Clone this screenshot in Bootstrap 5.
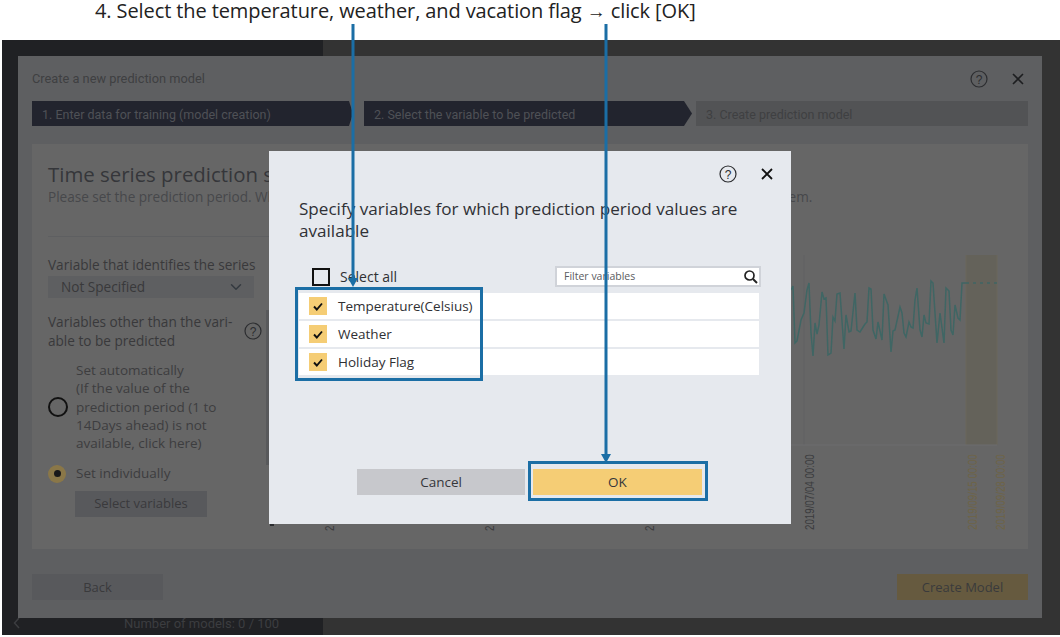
<!DOCTYPE html>
<html lang="en">
<head>
    <meta charset="UTF-8">
    <meta name="viewport" content="width=device-width, initial-scale=1.0">
    <title>Select variables</title>
    <link href="https://cdn.jsdelivr.net/npm/bootstrap@5.3.0/dist/css/bootstrap.min.css" rel="stylesheet">
    <style>
        html, body { height: 637px; overflow: hidden; }
        body { background: #fff; font-family: "Open Sans", "Noto Sans", sans-serif; position: relative; }
        .caption { height: 40px; padding-left: 95px; font-size: 20px; line-height: 22px; color: #222; letter-spacing: -.1px; white-space: nowrap; }
        .cap-arrow { font-family: "Liberation Sans", sans-serif; font-size: 19px; }
        .shot { position: relative; margin-left: 2px; height: 595px; background: #333; overflow: hidden; }
        .side { position: absolute; left: 0; top: 0; bottom: 0; width: 321px; background: #202124; }
        .models { position: absolute; left: 122px; bottom: 2px; font-size: 13px; font-family: Roboto, sans-serif; color: #3c3d40; }
        .back-chev { position: absolute; left: 11px; bottom: 6px; }
        .win { position: absolute; left: 16px; top: 16px; width: 1024px; height: 562px; background: #5e5f61; padding: 0 14px; color: #3a3a3c; font-size: 14px; }
        .win-head { height: 44px; padding-top: 1px; font-size: 12.800px; font-family: Roboto, sans-serif; color: #3f4042; }
        .win-head .tool-gap { gap: 23px; padding-right: 3px; }
        .steps { height: 25px; font-size: 12.500px; font-family: Roboto, sans-serif; margin-top: 1px; }
        .step-item { background: #22242e; color: #4f5156; height: 25px; line-height: 27px; padding-left: 10px; }
        .step-a { width: 321px; margin-right: 11px; clip-path: polygon(0 0, calc(100% - 4px) 0, 100% 50%, calc(100% - 4px) 100%, 0 100%); }
        .step-b { width: 328px; margin-right: 4px; clip-path: polygon(0 0, calc(100% - 8px) 0, 100% 50%, calc(100% - 8px) 100%, 0 100%); }
        .step-c { flex: 1; background: #525355; color: #3f4042; }
        .panel { height: 405px; margin-top: 18px; background: #666; position: relative; }
        .panel-left { width: 238px; padding: 15px 0 0 16px; flex: none; position: relative; }
        .chart { position: absolute; right: 0; top: 0; }
        .panel-title { font-size: 20.400px; line-height: 24px; color: #35363a; white-space: nowrap; margin: 3px 0 0; font-weight: 400; }
        .panel-sub { font-size: 13.600px; word-spacing: -.2px; line-height: 17px; color: #47484b; white-space: nowrap; margin-top: 2px; }
        .rule { height: 1px; background: #5e5f61; width: 230px; margin: 31px 0 19px; }
        .lbl { line-height: 18px; color: #39393b; white-space: nowrap; font-size: 13.600px; }
        .lbl-two { line-height: 19px; }
        .sel-dim { height: 22px; width: 206px; margin-top: 2px; padding: 0 0 0 13px; border: 0; border-radius: 0; background-color: #5e5f61; color: #39393b; font-size: 13.600px; line-height: 22px; background-position: right 10px center; }
        .other-row { margin-top: 14px; }
        .radio-empty { width: 20px; height: 20px; border: 2px solid #111; border-radius: 50%; flex: none; }
        .radio-on { width: 18px; height: 18px; border-radius: 50%; background: #8a7748; flex: none; display: flex; align-items: center; justify-content: center; margin-right: 2px; }
        .radio-on i { width: 7px; height: 7px; background: #18181a; border-radius: 50%; display: block; }
        .radio-text { margin-left: 8px; line-height: 18.300px; color: #3d3d3f; font-size: 13.500px; }
        .auto-row { margin-top: 11px; }
        .indiv-row { margin-top: 12px; }
        .btn-dim { background: #58595c; color: #3a3a3c; border: 0; border-radius: 0; font-size: 13px; padding: 0; height: 26px; width: 131px; line-height: 25px; }
        .select-btn { margin: 8px 0 0 27px; width: 132px; }
        .btn-make { background: #665a3f; }
        .win-foot { margin-top: 25px; }

        .dlg { position: absolute; left: 267px; top: 111px; width: 522px; height: 373px; background: #e6e9ee; padding: 0 30px; color: #2f3033; }
        .dlg-tools { height: 46px; gap: 23px; margin-right: -13px; }
        .dlg-title { font-size: 17.100px; line-height: 22px; margin: 1px 0 0; font-weight: 400; color: #303136; }
        .dlg-filter { margin-top: 24px; height: 21px; font-size: 14px; }
        .sq-empty { width: 18px; height: 18px; border: 2px solid #111; margin: 0 10px 0 13px; flex: none; }
        .search-box { width: 206px; height: 21px; background: #fff; border: 2px solid #d0d3d9; position: relative; font-size: 10.500px; line-height: 17px; padding-left: 7px; color: #5a5b60; }
        .search-box svg { position: absolute; right: 1px; top: 1px; }
        .var-list { margin-top: 6px; width: 460px; gap: 2px; border-radius: 0; }
        .var-row { height: 26px; background: #fff; border: 0; border-radius: 0 !important; padding: 0 0 0 10px; font-size: 13.500px; color: #2f3033; }
        .tick { width: 18px; height: 18px; background: #f5cd75; margin-right: 11px; flex: none; display: flex; align-items: center; justify-content: center; }
        .dlg-foot { position: absolute; left: 88px; top: 318px; gap: 8px; }
        .btn-flat { width: 168px; height: 26px; line-height: 26px; padding: 0; border: 0; border-radius: 0; font-size: 13.500px; color: #36373b; background: #c7c8cc; }
        .btn-ok { background: #f5cd75; width: 169px; }

        .mark-box { position: absolute; border: 3px solid #1b6ea5; }
        .mark-list { left: 295px; top: 287px; width: 188px; height: 94px; }
        .mark-ok { left: 528px; top: 461px; width: 180px; height: 40px; }
        .mark-arrows { position: absolute; left: 0; top: 0; }
    </style>
</head>
<body>

    <div class="caption">4. Select the temperature, weather, and vacation flag <span class="cap-arrow">→</span> click [OK]</div>

    <div class="shot">
        <div class="side"></div>
        <svg class="back-chev" width="8" height="12" viewBox="0 0 8 12"><path d="M6 1 1.500 6 6 11" fill="none" stroke="#3c3d40" stroke-width="1.500"/></svg>
        <div class="models">Number of models: 0 / 100</div>

        <div class="win">
            <div class="win-head d-flex align-items-center justify-content-between">
                <span>Create a new prediction model</span>
                <div class="tool-gap d-flex align-items-center">
                    <svg width="18" height="18" viewBox="0 0 18 18"><circle cx="9" cy="9" r="8" fill="none" stroke="#2c2d30" stroke-width="1.200"/><text x="9" y="13.500" font-size="12" text-anchor="middle" fill="#2c2d30" font-family="Liberation Sans">?</text></svg>
                    <svg width="14" height="14" viewBox="0 0 14 14"><path d="M2 2 12 12M12 2 2 12" stroke="#1d1e20" stroke-width="1.600"/></svg>
                </div>
            </div>
            <div class="steps d-flex">
                <div class="step-item step-a">1. Enter data for training (model creation)</div>
                <div class="step-item step-b">2. Select the variable to be predicted</div>
                <div class="step-item step-c">3. Create prediction model</div>
            </div>
            <div class="panel d-flex">
                <svg class="chart" width="766" height="405" viewBox="262 144 766 405">
                    <rect x="266" y="310" width="3" height="155" fill="#58595b"/>
                    <path d="M804 255V445" stroke="#606162" fill="none"/>
                    <rect x="966" y="255" width="31" height="190" fill="#64625a"/>
                    <path d="M966 255V445M997 255V445" stroke="#6a675a" fill="none"/>
                    <path d="M270 445H997" stroke="#6c6d6e" fill="none"/>
                    <polyline fill="none" stroke="#3f6664" stroke-width="1.500" points="791,290 793,286 795,343 797,341 801,320 804,313 807,290 809,283 811,333 813,356 815,323 817,334 819,325 822,292 824,299 826,298 828,355 831,353 833,317 835,321 837,294 840,293 844,349 846,315 849,332 851,331 855,293 857,330 860,332 865,324 867,322 869,288 871,289 873,330 876,339 878,322 882,340 884,294 888,305 891,352 893,331 895,330 900,307 902,313 904,333 906,337 909,322 911,327 913,328 915,300 917,288 920,330 922,337 924,315 926,323 929,324 931,281 933,283 937,343 940,313 944,343 946,288 949,291 951,330 953,335 955,305 958,318 960,320 962,283 966,283"/>
                    <path d="M966 283H997" stroke="#3f6664" stroke-width="1.500" stroke-dasharray="3 4" fill="none"/>
                    <path d="M270 525H274" stroke="#2c2d30" stroke-width="2"/>
                    <g font-family="Liberation Sans" font-size="12.500">
                        <text transform="translate(814 530) rotate(-90) scale(.78 1)" fill="#3b3c3e">2019/07/04 00:00</text>
                        <text transform="translate(977 530) rotate(-90) scale(.78 1)" fill="#6e6446">2019/09/15 00:00</text>
                        <text transform="translate(1005 530) rotate(-90) scale(.78 1)" fill="#6e6446">2019/09/28 00:00</text>
                        <text transform="translate(334 531) rotate(-90) scale(.78 1)" fill="#3b3c3e">2</text>
                        <text transform="translate(494 531) rotate(-90) scale(.78 1)" fill="#3b3c3e">2</text>
                        <text transform="translate(654 531) rotate(-90) scale(.78 1)" fill="#3b3c3e">2</text>
                    </g>
                </svg>
                <div class="panel-left">
                    <h2 class="panel-title">Time series prediction settings</h2>
                    <div class="panel-sub">Please set the prediction period. When using variables other than the variable to be predicted, please set values for them.</div>
                    <div class="rule"></div>
                    <div class="lbl">Variable that identifies the series</div>
                    <select class="form-select sel-dim"><option>Not Specified</option></select>
                    <div class="other-row d-flex align-items-center justify-content-between">
                        <div class="lbl lbl-two">Variables other than the vari-<br>able to be predicted</div>
                        <svg width="18" height="18" viewBox="0 0 18 18" class="me-2"><circle cx="9" cy="9" r="8" fill="none" stroke="#2c2d30" stroke-width="1.200"/><text x="9" y="13.500" font-size="12" text-anchor="middle" fill="#2c2d30" font-family="Liberation Sans">?</text></svg>
                    </div>
                    <div class="auto-row d-flex align-items-center">
                        <div class="radio-empty"></div>
                        <div class="radio-text">Set automatically<br>(If the value of the<br>prediction period (1 to<br>14Days ahead) is not<br>available, click here)</div>
                    </div>
                    <div class="indiv-row d-flex align-items-center">
                        <div class="radio-on"><i></i></div>
                        <div class="radio-text">Set individually</div>
                    </div>
                    <button type="button" class="btn btn-dim select-btn d-block">Select variables</button>
                </div>
            </div>
            <div class="win-foot d-flex justify-content-between">
                <button type="button" class="btn btn-dim">Back</button>
                <button type="button" class="btn btn-dim btn-make">Create Model</button>
            </div>

        </div>

        <div class="dlg">
            <div class="dlg-tools d-flex align-items-center justify-content-end">
                <svg width="18" height="18" viewBox="0 0 18 18"><circle cx="9" cy="9" r="8" fill="none" stroke="#2c2d30" stroke-width="1.200"/><text x="9" y="13.500" font-size="12" text-anchor="middle" fill="#2c2d30" font-family="Liberation Sans">?</text></svg>
                <svg width="14" height="14" viewBox="0 0 14 14"><path d="M2 2 12 12M12 2 2 12" stroke="#111" stroke-width="1.800"/></svg>
            </div>
            <h2 class="dlg-title">Specify variables for which prediction period values are available</h2>
            <div class="dlg-filter d-flex align-items-center justify-content-between">
                <div class="d-flex align-items-center"><div class="sq-empty"></div>Select all</div>
                <div class="search-box">Filter variables
                    <svg width="15" height="15" viewBox="0 0 15 15"><circle cx="6.500" cy="6.500" r="4.500" fill="none" stroke="#222" stroke-width="1.700"/><path d="M10 10 14 14" stroke="#222" stroke-width="2"/></svg>
                </div>
            </div>
            <div class="list-group var-list">
                <div class="list-group-item var-row d-flex align-items-center"><span class="tick"><svg width="10" height="9" viewBox="0 0 10 9"><path d="M1 4.500 3.800 7.500 9 1.500" fill="none" stroke="#111" stroke-width="1.900"/></svg></span>Temperature(Celsius)</div>
                <div class="list-group-item var-row d-flex align-items-center"><span class="tick"><svg width="10" height="9" viewBox="0 0 10 9"><path d="M1 4.500 3.800 7.500 9 1.500" fill="none" stroke="#111" stroke-width="1.900"/></svg></span>Weather</div>
                <div class="list-group-item var-row d-flex align-items-center"><span class="tick"><svg width="10" height="9" viewBox="0 0 10 9"><path d="M1 4.500 3.800 7.500 9 1.500" fill="none" stroke="#111" stroke-width="1.900"/></svg></span>Holiday Flag</div>
            </div>
            <div class="dlg-foot d-flex">
                <button type="button" class="btn btn-flat">Cancel</button>
                <button type="button" class="btn btn-flat btn-ok">OK</button>
            </div>
        </div>
    </div>

    <!-- annotation boxes and arrows over the screenshot -->
    <div class="mark-box mark-list"></div>
    <div class="mark-box mark-ok"></div>
    <svg class="mark-arrows" width="1060" height="637" viewBox="0 0 1060 637">
        <path d="M353 24V280M606 24V456" stroke="#1b6ea5" stroke-width="3" fill="none"/>
        <path d="M348 278H358L353 287ZM601 454H611L606 463Z" fill="#1b6ea5"/>
    </svg>

    <script src="https://cdn.jsdelivr.net/npm/bootstrap@5.3.0/dist/js/bootstrap.bundle.min.js"></script>
</body>
</html>
